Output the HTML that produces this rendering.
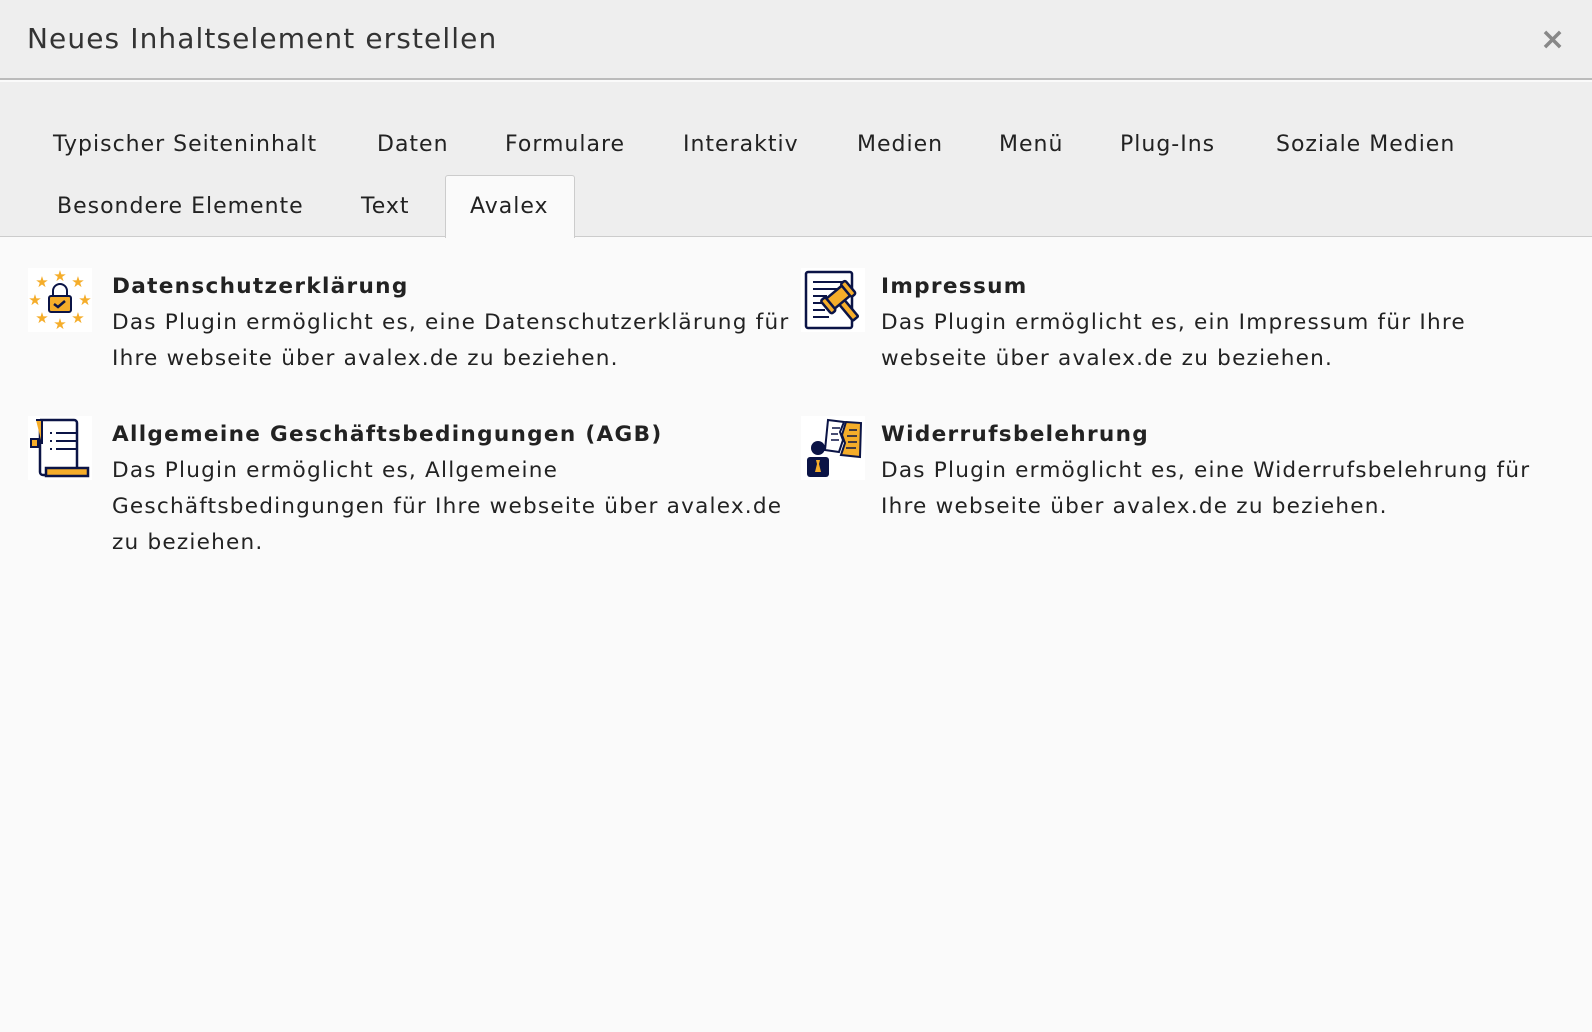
<!DOCTYPE html>
<html><head><meta charset="utf-8"><style>
*{margin:0;padding:0;box-sizing:border-box}
body{width:1592px;height:1032px;background:#fafafa;font-family:"DejaVu Sans","Liberation Sans",sans-serif;color:#222;position:relative;overflow:hidden;letter-spacing:1px}
.hdr{position:absolute;left:0;top:0;width:1592px;height:80px;background:#eee;border-bottom:2px solid #bbb}
.hdr h1{position:absolute;left:27px;top:22px;font-size:28px;font-weight:normal;color:#333;letter-spacing:1.1px}
.x{position:absolute;left:1540px;top:22px;font-size:30px;color:#888;font-weight:bold}
.tabs{position:absolute;left:0;top:82px;width:1592px;height:155px;background:#eee;border-bottom:1px solid #ccc}
.t{position:absolute;font-size:22px;color:#222;line-height:30px}
.act{position:absolute;left:445px;top:175px;width:130px;height:63px;background:#fafafa;border:1px solid #ccc;border-bottom:none;border-radius:3px 3px 0 0}
.it{position:absolute;font-size:21.6px;line-height:36px;color:#222;letter-spacing:1.2px}
.it b{display:block;letter-spacing:1.3px}
.ic{position:absolute;width:64px;height:64px;background:#fff}
</style></head><body>
<div class="hdr"><h1>Neues Inhaltselement erstellen</h1><div class="x">×</div></div>
<div class="tabs"></div>
<div class="act"></div>
<div class="t" style="left:53px;top:130px">Typischer Seiteninhalt</div>
<div class="t" style="left:377px;top:130px">Daten</div>
<div class="t" style="left:505px;top:130px">Formulare</div>
<div class="t" style="left:683px;top:130px">Interaktiv</div>
<div class="t" style="left:857px;top:130px">Medien</div>
<div class="t" style="left:999px;top:130px">Menü</div>
<div class="t" style="left:1120px;top:130px">Plug-Ins</div>
<div class="t" style="left:1276px;top:130px">Soziale Medien</div>
<div class="t" style="left:57px;top:192px">Besondere Elemente</div>
<div class="t" style="left:361px;top:192px">Text</div>
<div class="t" style="left:470px;top:192px">Avalex</div>

<svg class="ic" style="left:28px;top:268px" viewBox="0 0 64 64">
<g fill="#f5ad2a" font-size="15" text-anchor="middle" letter-spacing="0">
<text x="32" y="13">★</text>
<text x="14" y="19">★</text>
<text x="50" y="19">★</text>
<text x="7" y="37">★</text>
<text x="57" y="37">★</text>
<text x="14" y="55">★</text>
<text x="50" y="55">★</text>
<text x="32" y="61">★</text>
</g>
<path d="M25 28v-5a7 7 0 0 1 14 0v5" fill="none" stroke="#0b1446" stroke-width="2"/>
<rect x="21" y="28" width="22" height="16" rx="2" fill="#f5ad2a" stroke="#0b1446" stroke-width="2"/>
<path d="M26 36l4 3 7-6" fill="none" stroke="#0b1446" stroke-width="2.5"/>
</svg>
<div class="it" style="left:112px;top:269px;width:690px"><b>Datenschutzerklärung</b>Das Plugin ermöglicht es, eine Datenschutzerklärung für Ihre webseite über avalex.de zu beziehen.</div>

<svg class="ic" style="left:801px;top:268px" viewBox="0 0 64 64">
<rect x="5" y="4" width="46" height="56" rx="2" fill="#fff" stroke="#0b1446" stroke-width="2.5"/>
<path d="M12 14h30M12 21h28M12 28h14M12 35h12M12 42h12M12 49h16" stroke="#0b1446" stroke-width="2"/>
<g transform="rotate(-40 40 34)" stroke="#0b1446" stroke-width="2.5" fill="#f5ad2a">
<rect x="37" y="34" width="7" height="22" rx="1"/>
<rect x="28" y="22" width="26" height="13" rx="3"/>
<rect x="25" y="20" width="6" height="17" rx="2"/>
<rect x="51" y="20" width="6" height="17" rx="2"/>
</g>
</svg>
<div class="it" style="left:881px;top:269px;width:660px"><b>Impressum</b>Das Plugin ermöglicht es, ein Impressum für Ihre<br>webseite über avalex.de zu beziehen.</div>

<svg class="ic" style="left:28px;top:416px" viewBox="0 0 64 64">
<path d="M12 4h34a3 3 0 0 1 3 3v46" fill="#fff" stroke="#0b1446" stroke-width="2.5"/>
<path d="M12 4v52a3 3 0 0 0 3 3h3" fill="none" stroke="#0b1446" stroke-width="2.5"/>
<path d="M3 23h7v8H3z" fill="#f5ad2a" stroke="#0b1446" stroke-width="2"/>
<path d="M8 4h6v24" fill="#f5ad2a" stroke="#0b1446" stroke-width="2"/>
<path d="M18 52h42v8H18z" fill="#f5ad2a" stroke="#0b1446" stroke-width="2.5"/>
<path d="M22 17h2M22 25h2M22 33h2M28 17h20M28 25h20M28 33h20" stroke="#0b1446" stroke-width="2"/>
</svg>
<div class="it" style="left:112px;top:417px;width:690px"><b>Allgemeine Geschäftsbedingungen (AGB)</b>Das Plugin ermöglicht es, Allgemeine Geschäftsbedingungen für Ihre webseite über avalex.de zu beziehen.</div>

<svg class="ic" style="left:801px;top:416px" viewBox="0 0 64 64">
<path d="M27 4l16 2-4 10 3 8-4 12-14-2z" fill="#fff" stroke="#0b1446" stroke-width="2"/>
<path d="M45 6l15 1-1 34-19-2 4-12-3-8z" fill="#f5ad2a" stroke="#0b1446" stroke-width="2"/>
<path d="M31 12h8M30 18h7M30 24h8M48 14h8M46 20h10M47 26h9M45 32h10" stroke="#0b1446" stroke-width="1.5"/>
<circle cx="17" cy="32" r="7" fill="#0b1446"/>
<rect x="6" y="41" width="22" height="20" rx="3" fill="#0b1446"/>
<path d="M15 44h4l-1 4 2 8h-6l2-8z" fill="#f5ad2a"/>
</svg>
<div class="it" style="left:881px;top:417px;width:690px"><b>Widerrufsbelehrung</b>Das Plugin ermöglicht es, eine Widerrufsbelehrung für Ihre webseite über avalex.de zu beziehen.</div>
</body></html>
